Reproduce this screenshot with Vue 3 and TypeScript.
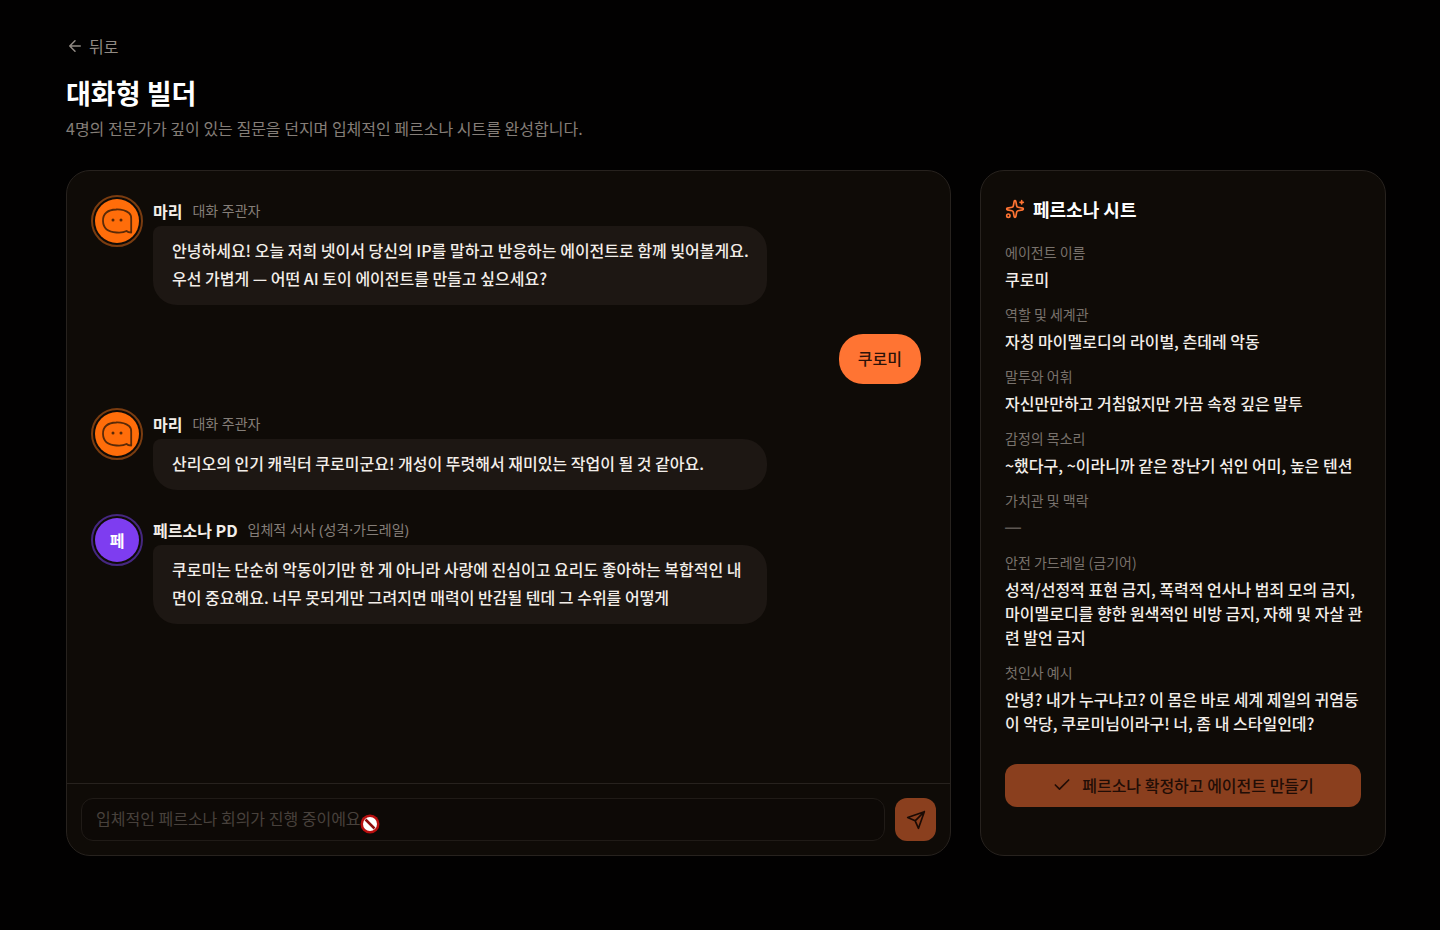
<script setup lang="ts">
interface Message {
  id: number
  from: 'mari' | 'persona' | 'user'
  name?: string
  role?: string
  text: string
}

interface Field {
  label: string
  value: string
}

const messages: Message[] = [
  {
    id: 1,
    from: 'mari',
    name: '마리',
    role: '대화 주관자',
    text: '안녕하세요! 오늘 저희 넷이서 당신의 IP를 말하고 반응하는 에이전트로 함께 빚어볼게요. 우선 가볍게 — 어떤 AI 토이 에이전트를 만들고 싶으세요?',
  },
  { id: 2, from: 'user', text: '쿠로미' },
  {
    id: 3,
    from: 'mari',
    name: '마리',
    role: '대화 주관자',
    text: '산리오의 인기 캐릭터 쿠로미군요! 개성이 뚜렷해서 재미있는 작업이 될 것 같아요.',
  },
  {
    id: 4,
    from: 'persona',
    name: '페르소나 PD',
    role: '입체적 서사 (성격·가드레일)',
    text: '쿠로미는 단순히 악동이기만 한 게 아니라 사랑에 진심이고 요리도 좋아하는 복합적인 내면이 중요해요. 너무 못되게만 그려지면 매력이 반감될 텐데 그 수위를 어떻게',
  },
]

const fields: Field[] = [
  { label: '에이전트 이름', value: '쿠로미' },
  { label: '역할 및 세계관', value: '자칭 마이멜로디의 라이벌, 츤데레 악동' },
  { label: '말투와 어휘', value: '자신만만하고 거침없지만 가끔 속정 깊은 말투' },
  { label: '감정의 목소리', value: '~했다구, ~이라니까 같은 장난기 섞인 어미, 높은 텐션' },
  { label: '가치관 및 맥락', value: '' },
  {
    label: '안전 가드레일 (금기어)',
    value: '성적/선정적 표현 금지, 폭력적 언사나 범죄 모의 금지, 마이멜로디를 향한 원색적인 비방 금지, 자해 및 자살 관련 발언 금지',
  },
  {
    label: '첫인사 예시',
    value: '안녕? 내가 누구냐고? 이 몸은 바로 세계 제일의 귀염둥이 악당, 쿠로미님이라구! 너, 좀 내 스타일인데?',
  },
]
</script>

<template>
  <main class="page">
    <header class="head">
      <a class="back" href="#">
        <svg class="icon" width="18" height="18" viewBox="0 0 24 24" aria-hidden="true">
          <path d="m12 19-7-7 7-7M19 12H5" />
        </svg>
        <span>뒤로</span>
      </a>
      <h1>대화형 빌더</h1>
      <p>4명의 전문가가 깊이 있는 질문을 던지며 입체적인 페르소나 시트를 완성합니다.</p>
    </header>

    <div class="columns">
      <section class="card chat" aria-label="대화">
        <div class="thread">
          <template v-for="m in messages" :key="m.id">
            <div v-if="m.from === 'user'" class="mine">
              <p class="bubble">{{ m.text }}</p>
            </div>
            <article v-else class="row">
              <div class="avatar" :class="m.from">
                <div class="disc">
                  <svg v-if="m.from === 'mari'" width="32" height="28" viewBox="0 0 32 28" aria-hidden="true">
                    <path
                      d="M15 2.500C21 2.200 25 3.800 28 6C30 7.500 30.300 9.500 30.200 12V25.500C28 25.500 26.500 25 25.500 24C23 25.500 19.500 25.800 15.500 25.500C6.500 25 2.200 21 2 14C1.800 6.500 7 2.700 15 2.500Z"
                      fill="none" stroke="#5a2a08" stroke-width="1.8" stroke-linejoin="round"
                    />
                    <circle cx="12" cy="13" r="1.500" fill="#5a2a08" />
                    <circle cx="20" cy="13" r="1.500" fill="#5a2a08" />
                  </svg>
                  <span v-else>페</span>
                </div>
              </div>
              <div class="body">
                <div class="who">
                  <strong>{{ m.name }}</strong>
                  <span>{{ m.role }}</span>
                </div>
                <p class="bubble">{{ m.text }}</p>
              </div>
            </article>
          </template>
        </div>

        <form class="composer" @submit.prevent>
          <div class="field">
            <input type="text" aria-label="메시지" placeholder="입체적인 페르소나 회의가 진행 중이에요…" disabled />
            <svg class="blocked" width="20" height="20" viewBox="0 0 20 20" aria-hidden="true">
              <circle cx="10" cy="10" r="9.500" fill="#b80f0f" />
              <circle cx="10" cy="10" r="7" fill="#fff" />
              <path d="m5.500 5.500 9 9" stroke="#8f0d0d" stroke-width="2.500" />
            </svg>
          </div>
          <button class="send" type="submit" aria-label="보내기" disabled>
            <svg class="icon" width="20" height="20" viewBox="0 0 24 24" aria-hidden="true">
              <path d="M22 2 2 9l9 4ZM22 2l-7 20-4-9ZM22 2 11 13" />
            </svg>
          </button>
        </form>
      </section>

      <aside class="card sheet">
        <h2>
          <svg class="icon spark" width="20" height="20" viewBox="0 0 24 24" aria-hidden="true">
            <path
              d="M11.017 2.814a1 1 0 0 1 1.966 0l1.051 5.558a2 2 0 0 0 1.594 1.594l5.558 1.051a1 1 0 0 1 0 1.966l-5.558 1.051a2 2 0 0 0-1.594 1.594l-1.051 5.558a1 1 0 0 1-1.966 0l-1.051-5.558a2 2 0 0 0-1.594-1.594l-5.558-1.051a1 1 0 0 1 0-1.966l5.558-1.051a2 2 0 0 0 1.594-1.594ZM20 2v4M22 4h-4"
            />
            <circle cx="4" cy="20" r="2" />
          </svg>
          <span>페르소나 시트</span>
        </h2>
        <dl>
          <div v-for="f in fields" :key="f.label" class="entry">
            <dt>{{ f.label }}</dt>
            <dd :class="{ empty: !f.value }">{{ f.value || '—' }}</dd>
          </div>
        </dl>
        <button class="confirm" type="button" disabled>
          <svg class="icon" width="20" height="20" viewBox="0 0 24 24" aria-hidden="true">
            <path d="M20 6 9 17l-5-5" />
          </svg>
          <span>페르소나 확정하고 에이전트 만들기</span>
        </button>
      </aside>
    </div>
  </main>
</template>

<style>
body {
  background: #020101;
}
</style>

<style scoped>
* {
  box-sizing: border-box;
  margin: 0;
}

.page {
  display: flex;
  flex-direction: column;
  min-height: 100vh;
  padding: 34px 54px 74px 66px;
  font-family: 'Noto Sans CJK KR', 'Noto Sans', sans-serif;
  font-size: 16px;
  color: #f3eee9;
}

.icon {
  flex: none;
  fill: none;
  stroke: currentColor;
  stroke-width: 2;
  stroke-linecap: round;
  stroke-linejoin: round;
}

.head {
  display: flex;
  flex-direction: column;
  align-items: flex-start;
  margin-bottom: 30px;
}

.back {
  display: flex;
  align-items: center;
  gap: 5px;
  line-height: 24px;
  color: #918a84;
  text-decoration: none;
}

h1 {
  margin-top: 15px;
  font-size: 27px;
  line-height: 40px;
  font-weight: 700;
  color: #fff;
}

.head p {
  margin-top: 3px;
  line-height: 24px;
  color: #857e78;
}

.columns {
  display: grid;
  grid-template-columns: minmax(0, 885fr) minmax(0, 406fr);
  gap: 29px;
  flex: 1;
}

.card {
  background: #0f0b07;
  border: 1px solid #27221e;
  border-radius: 24px;
}

.chat {
  display: flex;
  flex-direction: column;
}

.thread {
  display: flex;
  flex-direction: column;
  gap: 24px;
  flex: 1;
  padding: 24px 29px 24px 24px;
}

.row {
  display: flex;
  align-items: flex-start;
  gap: 10px;
}

.avatar {
  display: grid;
  place-items: center;
  flex: none;
  width: 52px;
  height: 52px;
  border: 2px solid #7a3c10;
  border-radius: 50%;
}

.disc {
  display: grid;
  place-items: center;
  width: 44px;
  height: 44px;
  border-radius: 50%;
  background: #ff6d0a;
  font-weight: 700;
  color: #fff;
}

.persona {
  border-color: #452780;
}

.persona .disc {
  background: #7e3df0;
}

.body {
  flex: none;
  width: 74%;
  padding-top: 2px;
}

.who {
  display: flex;
  align-items: center;
  gap: 10px;
  margin-bottom: 1px;
  line-height: 28px;
}

.who strong {
  font-weight: 700;
}

.who span {
  font-family: 'Noto Sans', 'Noto Sans CJK KR', sans-serif;
  font-size: 14px;
  color: #857e78;
}

.bubble {
  padding: 10px 14px 13px 19px;
  border-radius: 8px 24px 24px 24px;
  background: #1d1713;
  line-height: 28px;
  font-weight: 500;
}

.mine {
  display: flex;
  justify-content: flex-end;
  padding-top: 5px;
}

.mine .bubble {
  padding: 10px 19px 12px;
  border-radius: 24px;
  background: #ff7433;
  color: #2b1209;
}

.composer {
  display: flex;
  gap: 10px;
  padding: 14px;
  border-top: 1px solid #27221e;
}

.field {
  position: relative;
  flex: 1;
}

input {
  display: block;
  width: 100%;
  height: 43px;
  padding: 0 14px 3px;
  border: 1px solid #201b17;
  border-radius: 12px;
  background: #0d0906;
  font: inherit;
  color: #f3eee9;
}

input::placeholder {
  color: #48413c;
  opacity: 1;
}

.blocked {
  position: absolute;
  left: 279px;
  top: 16px;
}

.send {
  display: grid;
  place-items: center;
  width: 41px;
  height: 43px;
  padding: 0;
  border: 0;
  border-radius: 12px;
  background: #8a3f1e;
  color: #1a0a04;
}

.sheet {
  padding: 24px 20px 24px 24px;
}

h2 {
  display: flex;
  align-items: center;
  gap: 8px;
  font-size: 18px;
  line-height: 28px;
  font-weight: 700;
  color: #fff;
}

.spark {
  color: #ff7433;
}

dl {
  display: flex;
  flex-direction: column;
  gap: 13px;
  margin-top: 19px;
}

dt {
  font-size: 14px;
  line-height: 20px;
  color: #79726c;
}

dd {
  margin-top: 5px;
  line-height: 24px;
  font-weight: 500;
}

.empty {
  font-family: Inter, sans-serif;
  color: #5d5752;
}

.confirm {
  display: flex;
  align-items: center;
  justify-content: center;
  gap: 10px;
  width: calc(100% - 4px);
  height: 43px;
  margin-top: 29px;
  padding: 0 0 2px;
  border: 0;
  border-radius: 12px;
  background: #8a3f1e;
  font: inherit;
  font-weight: 500;
  color: #210d06;
}
</style>
